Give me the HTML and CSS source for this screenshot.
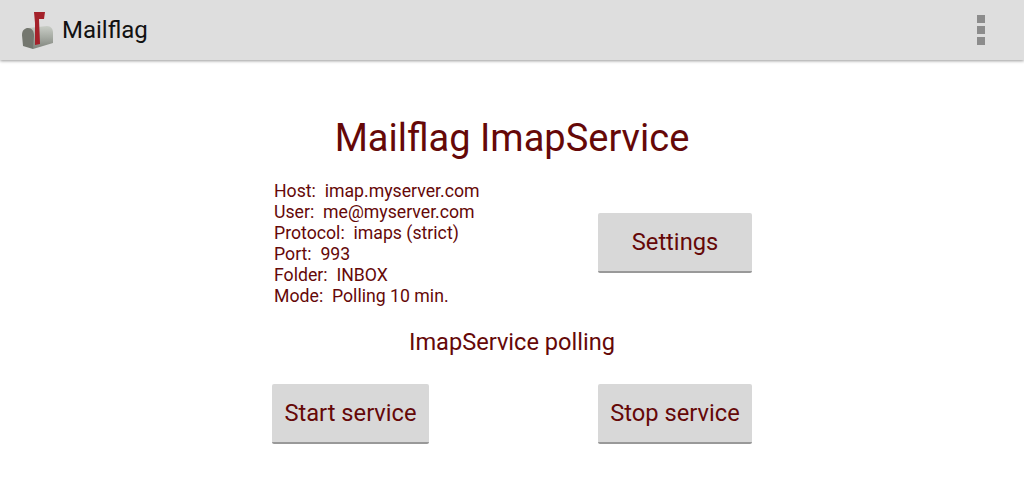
FILE: index.html
```html
<!DOCTYPE html>
<html lang="en">
<head>
    <meta charset="UTF-8">
    <title>Mailflag</title>
    <link rel="stylesheet" href="styles.css">
</head>
<body>
    <div class="action-bar">
        <div class="brand">
            <svg class="logo" width="32" height="38" viewBox="0 0 32 38">
                <defs>
                    <linearGradient id="boxShade" x1="0" y1="0" x2="0" y2="1">
                        <stop offset="0" stop-color="#c9cdc6"/>
                        <stop offset="0.5" stop-color="#a5aaa2"/>
                        <stop offset="1" stop-color="#7f837c"/>
                    </linearGradient>
                </defs>
                <path d="M7 17 L26 15 C30 15 32 18 32 22 L32 32 L12 38 Z" fill="url(#boxShade)"/>
                <path d="M12 38 L2 35 L1 24 C1 19 4 17 7 17 C11 17 13 20 13 25 Z" fill="#74776f"/>
                <path d="M13 1 L24 1 L23 8 L18 8 L19 33 L14 34 L14 12 Z" fill="#a4212a"/>
            </svg>
            <span class="app-name">Mailflag</span>
        </div>
        <div class="overflow">
            <span></span>
            <span></span>
            <span></span>
        </div>
    </div>

    <div class="content">
        <h1 class="title">Mailflag ImapService</h1>
        <div class="info-row">
            <div class="info">
                <div>Host:&nbsp; imap.myserver.com</div>
                <div>User:&nbsp; me@myserver.com</div>
                <div>Protocol:&nbsp; imaps (strict)</div>
                <div>Port:&nbsp; 993</div>
                <div>Folder:&nbsp; INBOX</div>
                <div>Mode:&nbsp; Polling 10 min.</div>
            </div>
            <button class="btn settings-btn">Settings</button>
        </div>
        <div class="status">ImapService polling</div>
        <div class="service-row">
            <button class="btn start-btn">Start service</button>
            <button class="btn stop-btn">Stop service</button>
        </div>
    </div>
</body>
</html>
```
FILE: styles.css
```css
* {
    box-sizing: border-box;
}
body {
    margin: 0;
    height: 500px;
    overflow: hidden;
    background-color: #fff;
    font-family: Roboto, "Liberation Sans", sans-serif;
    color: #650808;
}
.action-bar {
    height: 60px;
    background-color: #dedede;
    box-shadow: 0 1px 3px #999;
    display: flex;
    justify-content: space-between;
    align-items: center;
    padding: 0 39px 0 21px;
}
.brand {
    display: flex;
    align-items: center;
    gap: 9px;
}
.logo {
    display: block;
}
.app-name {
    font-size: 24px;
    color: #111;
}
.overflow {
    display: flex;
    flex-direction: column;
    gap: 3px;
}
.overflow span {
    display: block;
    width: 8px;
    height: 8px;
    background-color: #8c8c8c;
}
.content {
    width: 480px;
    margin: 0 auto;
    padding-top: 56px;
}
.title {
    margin: 0 0 21px;
    font-size: 38px;
    font-weight: 400;
    line-height: 44px;
    text-align: center;
}
.info-row {
    display: flex;
    justify-content: space-between;
    align-items: center;
    padding: 0 0 0 2px;
}
.info {
    font-size: 17.7px;
    line-height: 21px;
}
.btn {
    height: 60px;
    padding: 0;
    border: none;
    border-bottom: 2px solid #999;
    border-radius: 2px;
    background-color: #d8d8d8;
    color: #650808;
    font-family: inherit;
    font-size: 23.7px;
}
.settings-btn {
    margin-bottom: 2px;
}
.settings-btn,
.stop-btn {
    width: 154px;
}
.start-btn {
    width: 157px;
}
.status {
    margin-top: 21px;
    font-size: 23.6px;
    line-height: 28px;
    text-align: center;
}
.service-row {
    display: flex;
    justify-content: space-between;
    margin-top: 28px;
}
```
